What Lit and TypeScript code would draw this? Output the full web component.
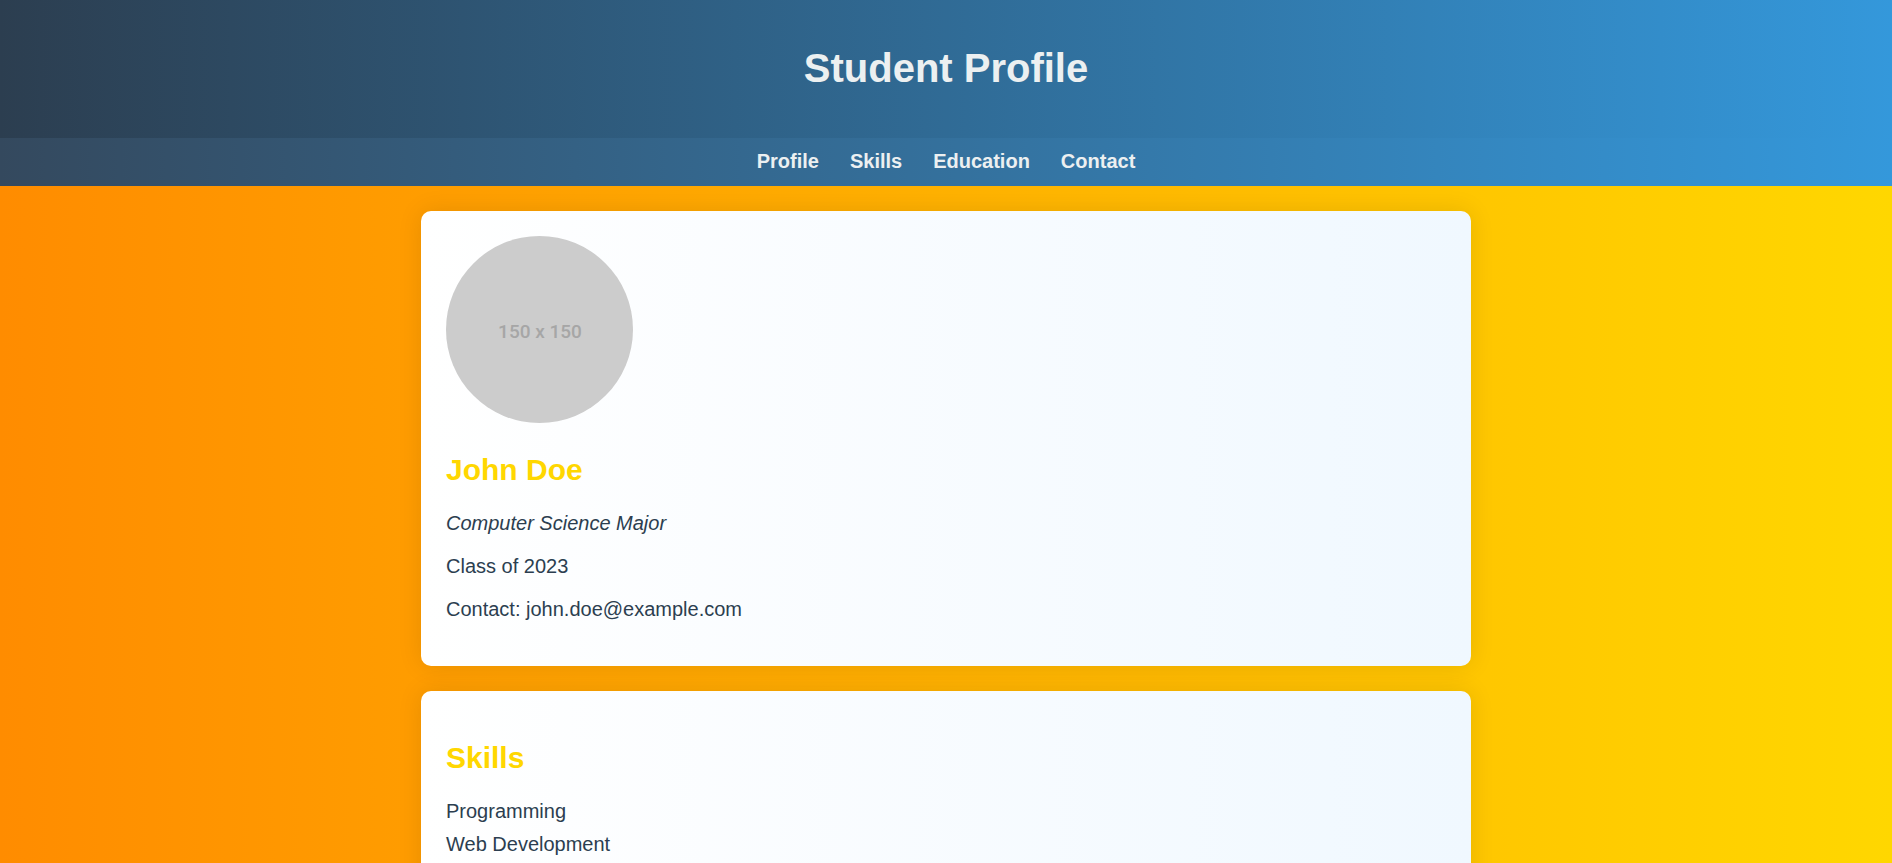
import { LitElement, html, css } from "lit";
import { customElement } from "lit/decorators.js";

@customElement("app-root")
export class AppRoot extends LitElement {
  static styles = css`
    :host {
      display: block;
      min-height: 100vh;
      font-family: Arial, "Liberation Sans", sans-serif;
      font-size: 20px;
      line-height: 23px;
      color: #2c3e50;
      background: linear-gradient(to right, #ff8c00, #ffd700);
    }
    .top {
      background: linear-gradient(to right, #2c3e50, #3498db);
      color: #ecf0f1;
      text-align: center;
    }
    h1 {
      margin: 0;
      padding: 45px 20px 47px;
      font-size: 40px;
      line-height: 46px;
    }
    nav {
      display: flex;
      justify-content: center;
      gap: 31px;
      padding: 12px 0 13px;
      background: linear-gradient(to right, #34495e, #3498db);
    }
    nav a {
      color: inherit;
      font-weight: bold;
      text-decoration: none;
    }
    main {
      display: grid;
      gap: 25px;
      max-width: 1050px;
      margin: 0 auto;
      padding: 25px 0;
    }
    section {
      padding: 25px;
      border-radius: 10px;
      background: linear-gradient(to right, #ffffff, #f0f8ff);
      box-shadow: 0 0 25px rgba(0, 0, 0, 0.1);
    }
    .photo {
      display: block;
      width: 187px;
      height: 187px;
      margin-bottom: 30px;
      border-radius: 50%;
    }
    h2 {
      margin: 25px 0;
      font-size: 30px;
      line-height: 34px;
      color: #ffd700;
    }
    p {
      margin: 20px 0;
    }
    ul {
      margin: 0;
      padding: 0;
      list-style: none;
    }
    li {
      margin-bottom: 10px;
    }
  `;

  render() {
    return html`
      <header class="top">
        <h1>Student Profile</h1>
        <nav>
          <a href="#profile">Profile</a>
          <a href="#skills">Skills</a>
          <a href="#education">Education</a>
          <a href="#contact">Contact</a>
        </nav>
      </header>
      <main>
        <section id="profile">
          <svg class="photo" viewBox="0 0 187 187" role="img" aria-label="Profile picture">
            <rect width="187" height="187" fill="#cccccc" />
            <text x="94" y="102" text-anchor="middle" font-family="Roboto" font-weight="500" font-size="19" fill="#a6a6a6">150 x 150</text>
          </svg>
          <h2>John Doe</h2>
          <p><em>Computer Science Major</em></p>
          <p>Class of 2023</p>
          <p>Contact: john.doe@example.com</p>
        </section>
        <section id="skills">
          <h2>Skills</h2>
          <ul>
            <li>Programming</li>
            <li>Web Development</li>
          </ul>
        </section>
      </main>
    `;
  }
}
